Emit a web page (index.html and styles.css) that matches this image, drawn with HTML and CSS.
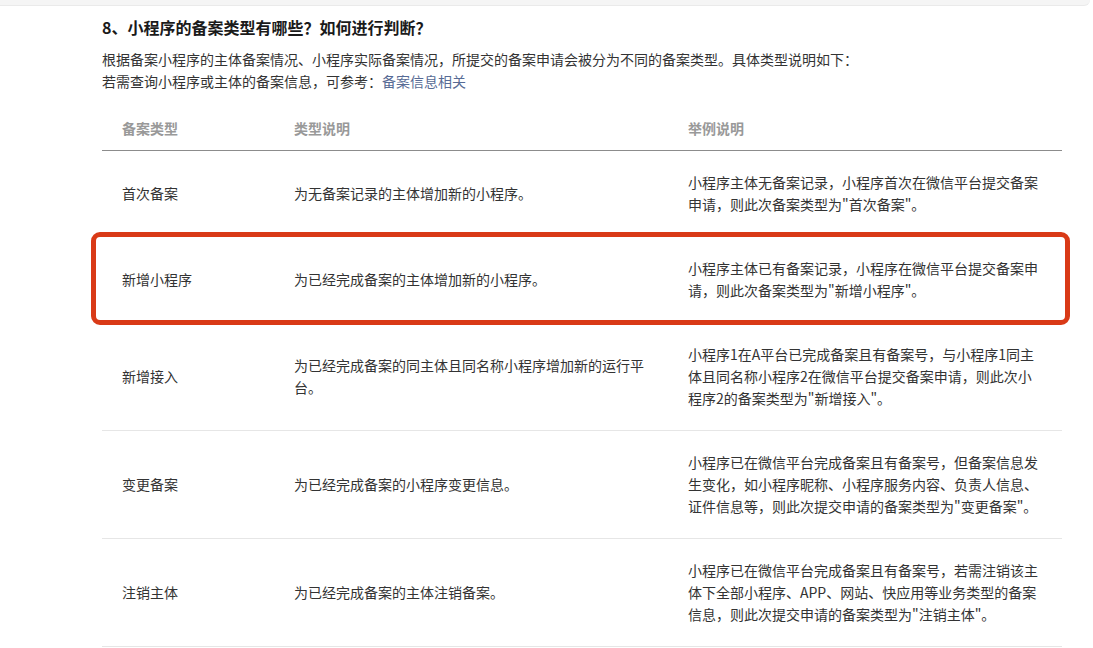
FILE: index.html
```html
<!DOCTYPE html>
<html lang="zh-CN">
<head>
<meta charset="utf-8">
<title>小程序的备案类型</title>
<link rel="stylesheet" href="styles.css">
</head>
<body>
<div class="topbar"></div>
<main class="content">
  <h2 class="title">8、小程序的备案类型有哪些？如何进行判断？</h2>
  <p class="intro">根据备案小程序的主体备案情况、小程序实际备案情况，所提交的备案申请会被分为不同的备案类型。具体类型说明如下：<br>若需查询小程序或主体的备案信息，可参考：<a class="link" href="#">备案信息相关</a></p>
  <div class="table">
    <div class="row head">
      <div class="cell c1">备案类型</div>
      <div class="cell c2">类型说明</div>
      <div class="cell c3">举例说明</div>
    </div>
    <div class="row">
      <div class="cell c1">首次备案</div>
      <div class="cell c2">为无备案记录的主体增加新的小程序。</div>
      <div class="cell c3">小程序主体无备案记录，小程序首次在微信平台提交备案申请，则此次备案类型为"首次备案"。</div>
    </div>
    <div class="row marked">
      <div class="cell c1">新增小程序</div>
      <div class="cell c2">为已经完成备案的主体增加新的小程序。</div>
      <div class="cell c3">小程序主体已有备案记录，小程序在微信平台提交备案申请，则此次备案类型为"新增小程序"。</div>
    </div>
    <div class="row">
      <div class="cell c1">新增接入</div>
      <div class="cell c2">为已经完成备案的同主体且同名称小程序增加新的运行平台。</div>
      <div class="cell c3">小程序1在A平台已完成备案且有备案号，与小程序1同主体且同名称小程序2在微信平台提交备案申请，则此次小程序2的备案类型为"新增接入"。</div>
    </div>
    <div class="row">
      <div class="cell c1">变更备案</div>
      <div class="cell c2">为已经完成备案的小程序变更信息。</div>
      <div class="cell c3">小程序已在微信平台完成备案且有备案号，但备案信息发生变化，如小程序昵称、小程序服务内容、负责人信息、证件信息等，则此次提交申请的备案类型为"变更备案"。</div>
    </div>
    <div class="row">
      <div class="cell c1">注销主体</div>
      <div class="cell c2">为已经完成备案的主体注销备案。</div>
      <div class="cell c3">小程序已在微信平台完成备案且有备案号，若需注销该主体下全部小程序、APP、网站、快应用等业务类型的备案信息，则此次提交申请的备案类型为"注销主体"。</div>
    </div>
  </div>
</main>
</body>
</html>
```

FILE: styles.css
```css
* { box-sizing: border-box; }

html, body {
  margin: 0;
  padding: 0;
  background: #fff;
}

body {
  font-family: "Noto Sans CJK SC", "Noto Sans", sans-serif;
  color: #333;
  font-size: 14px;
  line-height: 22px;
}

.topbar {
  width: 1090px;
  height: 6px;
  background: #f5f5f5;
  border-bottom: 1px solid #eaeaea;
  border-bottom-right-radius: 10px;
}

.content {
  padding: 9px 0 0 102px;
}

.title {
  margin: 0;
  font-size: 16px;
  line-height: 24px;
  font-weight: bold;
  color: #1a1a1a;
}

.intro {
  margin: 9px 0 14px;
  color: #333;
}

.link {
  color: #576b95;
  text-decoration: none;
}

.table {
  width: 960px;
}

.row {
  display: grid;
  grid-template-columns: 172px 394px 394px;
  align-items: center;
  border-bottom: 1px solid #e6e6e6;
}

.row.head {
  border-bottom: 1px solid #8c8c8c;
}

.cell {
  padding: 20px 20px 21px;
}

.head .cell {
  padding-top: 11px;
  padding-bottom: 11px;
  color: #999;
  font-weight: bold;
}

.marked {
  position: relative;
}

.marked::after {
  content: "";
  position: absolute;
  left: -11px;
  right: -8px;
  top: -5px;
  bottom: -3px;
  border: 5px solid #d93a17;
  border-radius: 9px;
  pointer-events: none;
}
```
